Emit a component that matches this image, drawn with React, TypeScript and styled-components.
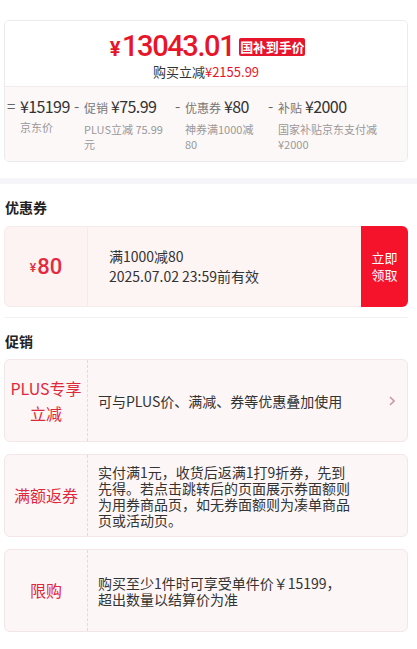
import React from 'react';
import styled, {createGlobalStyle} from 'styled-components';

const GlobalStyle = createGlobalStyle`
  html, body {
    margin: 0;
    padding: 0;
    background: #ffffff;
  }
  body {
    font-family: "Noto Sans CJK SC", "Noto Sans", sans-serif;
    color: #333333;
  }
  * {
    box-sizing: border-box;
  }
`;

type BreakdownItem = {
  op: string;
  label?: string;
  value: string;
  sub: string;
  width: number;
  subWidth: number;
};

const breakdown: BreakdownItem[] = [
  {op: '=', value: '¥15199', sub: '京东价', width: 67, subWidth: 44},
  {op: '-', label: '促销', value: '¥75.99', sub: 'PLUS立减 75.99元', width: 101, subWidth: 84},
  {op: '-', label: '优惠券', value: '¥80', sub: '神券满1000减80', width: 93, subWidth: 72},
  {op: '-', label: '补贴', value: '¥2000', sub: '国家补贴京东支付减¥2000', width: 130, subWidth: 104},
];

type Promo = {
  tag: string[];
  text: string;
  arrow?: boolean;
};

const promos: Promo[] = [
  {tag: ['PLUS专享', '立减'], text: '可与PLUS价、满减、券等优惠叠加使用', arrow: true},
  {
    tag: ['满额返券'],
    text: '实付满1元，收货后返满1打9折券，先到先得。若点击跳转后的页面展示券面额则为用券商品页，如无券面额则为凑单商品页或活动页。',
  },
  {tag: ['限购'], text: '购买至少1件时可享受单件价￥15199，超出数量以结算价为准'},
];

export default function App() {
  return (
    <>
      <GlobalStyle />
      <Page>
        <TopSection>
          <PriceCard>
            <PriceHead>
              <PriceLine>
                <Price>
                  <Yen>¥</Yen>13043.01
                </Price>
                <Badge>国补到手价</Badge>
              </PriceLine>
              <Saving>
                购买立减<SavingValue>¥2155.99</SavingValue>
              </Saving>
            </PriceHead>
            <Breakdown>
              {breakdown.map((item) => (
                <BreakCell key={item.sub} width={item.width}>
                  <Op wide={item.op === '='}>{item.op}</Op>
                  <BreakBody>
                    <BreakHead>
                      {item.label && <BreakLabel>{item.label}</BreakLabel>}
                      {item.value}
                    </BreakHead>
                    <BreakSub maxWidth={item.subWidth}>{item.sub}</BreakSub>
                  </BreakBody>
                </BreakCell>
              ))}
            </Breakdown>
          </PriceCard>
        </TopSection>
        <Band />
        <Section divided>
          <SectionTitle>优惠券</SectionTitle>
          <Coupon>
            <CouponAmount>
              <CouponYen>¥</CouponYen>80
            </CouponAmount>
            <CouponInfo>
              <span>满1000减80</span>
              <span>2025.07.02 23:59前有效</span>
            </CouponInfo>
            <CouponButton>立即领取</CouponButton>
          </Coupon>
        </Section>
        <Section>
          <SectionTitle>促销</SectionTitle>
          <PromoList>
            {promos.map((p) => (
              <PromoCard key={p.tag.join('')}>
                <PromoTag>
                  {p.tag.map((t) => (
                    <span key={t}>{t}</span>
                  ))}
                </PromoTag>
                <PromoBody>
                  <PromoText>{p.text}</PromoText>
                  {p.arrow && (
                    <Chevron viewBox="0 0 6 10" width="6" height="10">
                      <path d="M1 1 L5 5 L1 9" fill="none" stroke="#c99aa4" strokeWidth="1.6" />
                    </Chevron>
                  )}
                </PromoBody>
              </PromoCard>
            ))}
          </PromoList>
        </Section>
      </Page>
    </>
  );
}

const Page = styled.div`
  width: 417px;
  min-height: 649px;
  background: #ffffff;
`;

const TopSection = styled.div`
  padding: 20px 9px 16px 4px;
`;

const PriceCard = styled.div`
  border: 1px solid #ebebeb;
  border-radius: 5px;
  overflow: hidden;
`;

const PriceHead = styled.div`
  height: 65px;
  padding-top: 12px;
  display: flex;
  flex-direction: column;
  align-items: center;
  background: #ffffff;
`;

const PriceLine = styled.div`
  display: flex;
  align-items: center;
  gap: 5px;
  height: 28px;
  padding-left: 3px;
`;

const Price = styled.div`
  font-family: Roboto, "Noto Sans", sans-serif;
  font-size: 29px;
  font-weight: 500;
  letter-spacing: -1.4px;
  color: #e8152a;
  line-height: 28px;
`;

const Yen = styled.span`
  font-size: 20px;
  font-weight: 700;
  margin-right: 3px;
`;

const Badge = styled.div`
  background: #e6152b;
  color: #ffffff;
  font-size: 13px;
  font-weight: 700;
  height: 18px;
  line-height: 18px;
  padding: 0 1px;
  border-radius: 2px;
  letter-spacing: -0.2px;
`;

const Saving = styled.div`
  margin-top: 2px;
  font-size: 13px;
  line-height: 18px;
  color: #333333;
`;

const SavingValue = styled.span`
  color: #e8152a;
`;

const Breakdown = styled.div`
  display: flex;
  background: #fdf8f8;
  border-top: 1px solid #f3ecec;
  padding: 9px 0 9px 2px;
`;

const BreakCell = styled.div<{width: number}>`
  display: flex;
  width: ${({width}) => width}px;
  flex-shrink: 0;
`;

const Op = styled.div<{wide: boolean}>`
  width: ${({wide}) => (wide ? 13 : 10)}px;
  flex-shrink: 0;
  font-size: 15px;
  line-height: 20px;
  color: #666666;
`;

const BreakBody = styled.div`
  display: flex;
  flex-direction: column;
`;

const BreakHead = styled.div`
  font-size: 16px;
  line-height: 20px;
  letter-spacing: -0.6px;
  color: #333333;
  white-space: nowrap;
`;

const BreakLabel = styled.span`
  font-size: 12px;
  letter-spacing: 0;
  color: #777777;
  margin-right: 3px;
`;

const BreakSub = styled.div<{maxWidth: number}>`
  margin-top: 4px;
  max-width: ${({maxWidth}) => maxWidth}px;
  font-size: 11px;
  line-height: 15px;
  color: #999999;
`;

const Band = styled.div`
  height: 6px;
  background: #f6f6fa;
`;

const Section = styled.div<{divided?: boolean}>`
  margin: 0 9px 0 4px;
  padding: 13px 0 10px;
  border-bottom: ${({divided}) => (divided ? '1px solid #f2f2f2' : 'none')};
`;

const SectionTitle = styled.div`
  font-size: 14px;
  font-weight: 700;
  line-height: 20px;
  color: #222222;
  padding-left: 1px;
`;

const Coupon = styled.div`
  margin-top: 9px;
  display: flex;
  height: 81px;
`;

const CouponAmount = styled.div`
  width: 84px;
  display: flex;
  align-items: center;
  justify-content: center;
  background: #fdf3f3;
  border: 1px solid #f7eaea;
  border-radius: 6px 0 0 6px;
  color: #e32a3e;
  font-family: Roboto, "Noto Sans", sans-serif;
  font-size: 22px;
  font-weight: 500;
  padding-bottom: 1px;
`;

const CouponYen = styled.span`
  font-size: 12px;
  margin-top: 4px;
  margin-right: 1px;
`;

const CouponInfo = styled.div`
  flex: 1;
  display: flex;
  flex-direction: column;
  justify-content: center;
  gap: 4px;
  padding-left: 21px;
  padding-bottom: 2px;
  background: #fdf4f4;
  border-top: 1px solid #f7eaea;
  border-bottom: 1px solid #f7eaea;
  font-size: 14px;
  line-height: 16px;
  color: #333333;
`;

const CouponButton = styled.div`
  width: 47px;
  display: flex;
  align-items: center;
  justify-content: center;
  padding: 0 10px 2px;
  text-align: center;
  background: #f5132c;
  border-radius: 0 6px 6px 0;
  color: #ffffff;
  font-size: 13px;
  line-height: 17px;
`;

const PromoList = styled.div`
  margin-top: 8px;
  display: flex;
  flex-direction: column;
  gap: 12px;
`;

const PromoCard = styled.div`
  display: flex;
  min-height: 83px;
  background: #fdf6f6;
  border: 1px solid #f3e6e6;
  border-radius: 6px;
`;

const PromoTag = styled.div`
  width: 83px;
  flex-shrink: 0;
  display: flex;
  flex-direction: column;
  align-items: center;
  justify-content: center;
  border-right: 1px dashed #ecd6d6;
  color: #e0283c;
  font-size: 16px;
  line-height: 25px;
  text-align: center;
`;

const PromoBody = styled.div`
  flex: 1;
  display: flex;
  align-items: center;
  padding: 8px 0 8px 10px;
`;

const PromoText = styled.div`
  width: 255px;
  font-size: 14px;
  line-height: 16px;
  color: #333333;
`;

const Chevron = styled.svg`
  margin-left: auto;
  margin-right: 12px;
  flex-shrink: 0;
`;
